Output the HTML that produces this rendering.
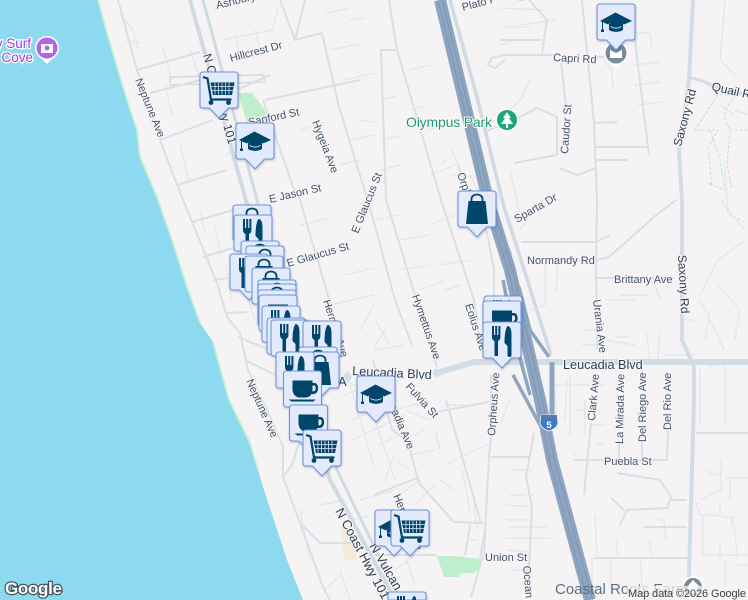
<!DOCTYPE html>
<html><head><meta charset="utf-8"><style>
html,body{margin:0;padding:0;width:748px;height:600px;overflow:hidden;background:#f5f3f4}
svg{display:block;overflow:hidden}
text{font-family:"Liberation Sans",sans-serif}
.l{font-size:11px;fill:#44526a;stroke:#f8f7f8;stroke-width:2.2px;paint-order:stroke;stroke-linejoin:round}
.d{font-size:12px;fill:#2f3d52;stroke:#f8f7f8;stroke-width:2.2px;paint-order:stroke;stroke-linejoin:round}
.b{fill:#e3eafb;stroke:#6d95da;stroke-width:1.1}
.i{fill:#03446a}
</style></head><body>
<svg width="748" height="600" viewBox="0 0 748 600" xmlns="http://www.w3.org/2000/svg">
<defs>
<filter id="s" x="-20%" y="-20%" width="140%" height="140%"><feDropShadow dx="0.5" dy="1" stdDeviation="1" flood-color="#2a3a55" flood-opacity=".3"/></filter>
<path id="bx" class="b" d="M3 0H35Q38 0 38 3V33Q38 36 35 36H28.500L19 46 9.500 36H3Q0 36 0 33V3Q0 0 3 0Z"/>
<g id="cart"><use href="#bx"/><path class="i" d="M10.500 10.500H34.500L32 23H13Z"/><path d="M15 11V22.500M18.500 11V22.500M22 11V22.500M25.500 11V22.500M29 11V22.500M11.500 14.500H34M12 18.500H33" stroke="#e3eafb" stroke-width=".8" fill="none"/><path d="M3 5L7.500 6.500 11 27.500H31.500" fill="none" stroke="#03446a" stroke-width="2.200"/><circle class="i" cx="11" cy="30.500" r="2.400"/><circle class="i" cx="28.500" cy="30.500" r="2.400"/></g>
<g id="fork"><use href="#bx"/><path class="i" d="M9 4H11V13H12.200V4H14.200V13H15.400V4H17.400V15Q17.400 18 15 19V34H11.500V19Q9 18 9 15Z"/><path class="i" d="M24.500 4C27 4 28.500 7 28.500 12V33Q28.500 35 26.500 35T24.500 33V24L21.500 21Q21.500 8 24.500 4Z"/></g>
<g id="bag"><use href="#bx"/><path d="M13.500 11V8C13.500 2 24.500 2 24.500 8V11" fill="none" stroke="#03446a" stroke-width="1.800"/><path class="i" d="M10.500 10H27.500L30 33H8Z"/></g>
<g id="coffee"><use href="#bx"/><path class="i" d="M9 9.500H29V12H31C36 12 36 23 30 23H28C27 25 25 26 23 26.500H15C11 25.500 9 22 9 18Z"/><path d="M29 14.500H30.500C33 14.500 33 20.500 29 20.500" fill="#e3eafb"/><path class="i" d="M5 28.500H32L30 30.500H8Z"/></g>
<g id="grad"><use href="#bx"/><path class="i" d="M3 17L18.500 8.500 35 17 27 20.500C23 17 14 17 11 20.500Z"/><path class="i" d="M12 20C15 16.500 23 16.500 26 20V26C22 28.500 16 28.500 12 26Z"/><path d="M13.500 22.500C17 24.500 21 24.500 24.500 22.500" stroke="#e3eafb" fill="none" stroke-width="1"/><path class="i" d="M5 18H6V25.500H7V28H4V25.500H5Z"/></g>
</defs>

<rect width="748" height="600" fill="#f5f3f4"/>
<!-- parks -->
<path d="M238 93H252L265 110 267 123H247Z" fill="#bfeecd"/>
<path d="M437 556L454 556 481 559 481 567 474 573 461 573 459 577 444 577Z" fill="#bfeecd"/>
<path d="M340 525L353 527 357 560 345 560Z" fill="#f5ebd8"/>
<!-- water -->
<path d="M0 0H98L107 33 117 67 128 103 137 130 140 157 157 197 173 243 187 287 200 323 213 342 217 357 229 400 250 443 263 487 287 560 303 600H0Z" fill="#8dd9ef"/>
<path d="M98 0L107 33 117 67 128 103 137 130 140 157 157 197 173 243 187 287 200 323" fill="none" stroke="#c4f0d4" stroke-width="1.800"/>
<path d="M213 342L217 357 229 400 250 443 258 470" fill="none" stroke="#c4f0d4" stroke-width="1.800"/>

<!-- minor streets -->
<g fill="none" stroke="#e0e6eb" stroke-width="1.200" stroke-linejoin="round">
<path d="M120 14L133 30 138 50M125 40L140 43M165 85L172 115M163 48L172 80M190 50L200 78"/>
<path d="M222 40L272 30 278 10M235 33L240 58M255 30L262 55"/>
<path d="M330 50L360 44M325 14L350 8M344 80L374 73M350 140L374 135M358 120L374 122M340 165L360 160M350 20L365 18"/>
<path d="M180 145L190 185M225 155L235 150M265 100L280 97M300 130L325 122"/>
<path d="M200 210L205 232M214 225L222 255M225 265L232 300M245 290L255 320M300 225L330 218M315 255L345 248M330 305L374 295M345 275L374 268M358 205L374 200"/>
<path d="M375 320L390 345M385 330L375 345M360 330L374 305M374 350L405 345M400 270L430 265M420 290L445 280M400 240L430 235"/>
<path d="M376 220L398 215M381 100L397 96M381 140L400 136M381 170L400 165M410 70L430 65M410 110L425 106M426 130L450 125M430 175L455 165M430 225L455 215M440 265L470 260M445 290L460 285"/>
<path d="M500 8L545 10M520 25L556 20M502 27L530 27M514 40L500 45M530 80L520 100 M510 110L525 95"/>
<path d="M441 165L445 160M470 195L450 145 M450 175H465M470 175L480 195M510 170L520 215M520 230L530 215"/>
<path d="M634 33L650 33 652 48M634 65L660 62M635 85L660 82M638 105L662 102M603 60L612 70 613 90"/>
<path d="M725 0L720 60 735 75M724 160L728 210 745 230M735 115L720 105M700 295L718 260 745 240M718 285L740 310 735 340M705 340L710 310M700 300L724 350"/>
<path d="M545 265L545 305 530 310M558 260L556 293M606 300L636 300M582 345H600M605 340L635 345M615 337L630 337M583 330H600M642 275L655 285 660 300M620 295H648M664 355H694M646 330L650 360M660 330L658 360M680 320H694"/>
<path d="M555 390L557 430M567 380L565 420M585 400V435M555 385H605M570 375V435M576 410H600"/>
<path d="M700 370V425M725 365V425M708 367L720 363"/>
<path d="M573 450L577 460M590 425H606M595 445L605 443M721 458V480"/>
<path d="M705 470L715 475 721 472V490L700 500M725 478H748M730 480V500M733 515L730 530M695 500L700 515H712L733 518 738 560M720 515V505M730 555H748M720 545V560"/>
<path d="M595 515L597 558M616 540L618 558M649 540L652 558M658 520H664L666 540M703 515V555H735M725 560V595M738 565H748"/>
<path d="M592 558V585M611 558V585M640 558L642 585"/>
<path d="M374 430L385 425M378 445L400 435M385 480L394 455M395 460L410 470M400 495L420 480M410 455L435 450M405 440L425 430M430 420L405 410M395 410L430 400M380 380L390 372M345 380L395 410M345 395L390 375M352 420L385 405M352 440L405 415M350 385L375 470M365 390L395 480"/>
<path d="M414 505L435 485M440 480L455 490M445 465L475 450M462 470L470 510M412 530L420 538M474 500L477 530M470 540H478M510 400L500 425M475 450L488 445M445 405H470M435 430L440 450"/>
<path d="M510 470H532M510 495H534M510 527H547M505 538H550M510 570H530M505 520H534M505 505L533 507M507 550L530 552"/>
<path d="M360 500L395 490M320 505L345 500M340 495L355 520 370 515M300 510L310 560M340 570L350 600M325 590L340 575M395 570L415 555M405 555L415 585"/>
</g>
<!-- medium streets -->
<g fill="none" stroke="#d7e0e7" stroke-width="2" stroke-linejoin="round">
<path d="M118 0L137 70 160 140 183 200 217 283 227 317 240 333 248 370 267 410 283 447 283 477 300 523 323 587 330 600"/>
<path d="M300 523L320 543 353 543M283 477L292 465 300 440"/>
<path d="M137 70L200 52M150 93L200 80M170 77L263 75 265 82 170 85ZM160 140L213 120M177 185L227 170M192 222L233 210M203 257L233 248M213 280L228 278M227 313L247 312M238 337L270 350M245 360L275 375"/>
<path d="M270 75L225 95M265 100L360 80M305 0L295 40 322 33M295 40L280 0"/>
<path d="M263 100L293 187 300 200 333 313 345 350M322 33L338 103 372 215 395 300 412 345M373 360L392 430 407 440 419 483 454 522 484 523"/>
<path d="M389 0L397 50H381L386 200 437 367M397 50L441 200 474 300 481 350 M446 400L481 523"/>
<path d="M458 165L487 233 494 270 494 300M491 375V437L489 457 484 553 471 597M491 457H529M534 433L526 477 532 507 529 567"/>
<path d="M437 412L489 402M374 495L417 478M374 555H437M485 530L480 558M470 525L465 555"/>
<path d="M500 55H554M596 57H612M561 63L566 107M514 163L557 155M557 155L557 117 537 108 520 117 484 132M559 168L577 175 596 168M529 0L547 20 542 53M500 40L541 40M505 60L495 68 488 65 492 58 505 55"/>
<path d="M582 0L594 123 597 200 596 265 597 350M634 33L649 155M594 147H648M597 160L627 160M594 123L617 122"/>
<path d="M521 242H596L610 235M597 260L609 257 654 217 676 200M597 278H674M514 265L515 305 500 310"/>
<path d="M591 423L584 495M574 460H667L668 430M619 440V460M642 440V460"/>
<path d="M617 473L660 480 671 497 667 508 627 510 620 525M611 498L624 510M671 500H687M644 527H687M594 558H687M696 433H748"/>
<path d="M518 0H525M510 250L512 255"/>
</g>
<!-- major -->
<g fill="none" stroke-linejoin="round">
<path d="M190 0L245 197 330 480 395 600" stroke="#d0dae2" stroke-width="4"/>
<path d="M203 0L257 200 337 470 400 600" stroke="#d0dae2" stroke-width="3"/>
<path d="M450 0L477 97 504 207 521 260 551 355" stroke="#d0dae2" stroke-width="3.500"/>
<path d="M693 0L689 80 679 150 682 200 682 340 694 367 694 400 689 573 687 600" stroke="#d3dde5" stroke-width="4"/>
<path d="M689 78Q700 78 714 87L748 95" stroke="#d3dde5" stroke-width="3"/>
<path d="M437 373L474 362H748" stroke="#d3dde5" stroke-width="6"/>
<circle cx="437" cy="373" r="4" fill="#d3dde5"/>
<path d="M340 378L348 371 352 378 346 384Z" fill="#d3dde5"/>
<!-- I-5 -->
<path d="M519 287L530 330 549 357" stroke="#8da5c1" stroke-width="3.500"/>
<path d="M503 280L515 340 530 395" stroke="#8da5c1" stroke-width="3.500"/>
<path d="M552 362V415" stroke="#8da5c1" stroke-width="5"/>
<path d="M513 375L540 425" stroke="#8da5c1" stroke-width="3.500"/>
<path d="M440 0L488 200 510 270 540 400 552 460 590 600" stroke="#8da5c1" stroke-width="12"/>
<path d="M438 0L486 200 508 270 538 400 549.500 460 587.500 600M442.500 0L490.500 200 512.500 270 542.500 400 554.500 460 592.500 600" stroke="#7c95b5" stroke-width=".9"/>
</g>
<!-- I-5 shield -->
<path d="M541 415H557L558 423C557 428 552 430 549 431 546 430 541 428 540 423Z" fill="#3b7cc9" stroke="#f0f0f0" stroke-width=".8"/>
<rect x="541" y="415" width="16" height="3" fill="#6a7888"/>
<text x="549" y="428" font-size="9.500" font-weight="bold" fill="#fff" text-anchor="middle">5</text>

<!-- trails -->
<g fill="none" stroke="#a8e0c6" stroke-width=".8" stroke-dasharray="3 2">
<path d="M718 94L708 110 695 130 718 130 708 148 712 185 708 183 725 190 720 160 710 130M735 95L725 110 725 120 730 130 727 165 732 190M720 95H748M735 110L748 115M722 200L730 215 744 222M730 130H748"/>
</g>

<!-- POI -->
<path d="M47 64L38 55H56Z" fill="#fff"/><circle cx="47" cy="48" r="12" fill="#fff"/><circle cx="47" cy="48" r="10.500" fill="#b264ec"/>
<path d="M41 44H53V53H41Z" fill="#fff"/><circle cx="47" cy="48" r="2.500" fill="#b264ec"/>
<text x="31" y="48" font-size="13.500" fill="#a13ae0" text-anchor="end" stroke="#fff" stroke-width="2.500" paint-order="stroke">vy Surf</text>
<text x="33" y="62" font-size="13.500" fill="#a13ae0" text-anchor="end" stroke="#fff" stroke-width="2.500" paint-order="stroke">Cove</text>

<path d="M507 136L498 127H516Z" fill="#fff"/><circle cx="507" cy="120" r="11.500" fill="#fff"/><circle cx="507" cy="120" r="10" fill="#1ca774"/>
<path d="M507 112L511 118H509L513 124H508V128H506V124H501L505 118H503Z" fill="#fff"/>
<text x="406" y="127" font-size="14" fill="#1c9a6c" stroke="#fff" stroke-width="2" paint-order="stroke" textLength="86">Olympus Park</text>

<path d="M616 68L607 59H625Z" fill="#fff"/><circle cx="616" cy="53" r="12" fill="#fff"/><circle cx="616" cy="53" r="10.500" fill="#7a8c98"/>
<path d="M610 50L616 53 622 50V58H610Z" fill="#fff"/>

<circle cx="693" cy="587" r="11" fill="#fff"/><circle cx="693" cy="587" r="9" fill="#7a8c98"/><path d="M693 580L700 587H687Z M688 586H698V593H688Z" fill="#fff"/>

<!-- labels -->
<text class="l" transform="translate(217 9) rotate(-14)">Ashbury</text>
<text class="l" transform="translate(463 11) rotate(-15)">Plato P</text>
<text class="l" transform="translate(231 62) rotate(-15)">Hillcrest Dr</text>
<text class="d" transform="translate(203 55) rotate(74)">N Coast Hwy 101</text>
<text class="l" transform="translate(135 80) rotate(68)">Neptune Ave</text>
<text class="l" transform="translate(249 126) rotate(-12)">Sanford St</text>
<text class="l" transform="translate(312 122) rotate(69)">Hygeia Ave</text>
<text class="l" transform="translate(270 203) rotate(-13)">E Jason St</text>
<text class="l" transform="translate(358 234) rotate(-68)">E Glaucus St</text>
<text class="l" transform="translate(288 267) rotate(-16)">E Glaucus St</text>
<text class="l" transform="translate(323 301) rotate(72)">Hermes Ave</text>
<text class="d" transform="translate(352 375) rotate(3)" style="font-size:12.700px">Leucadia Blvd</text>
<text class="d" x="563" y="369" style="font-size:12.700px">Leucadia Blvd</text>
<text class="d" x="338" y="386" style="font-size:13px">A</text>
<text class="l" transform="translate(405 387) rotate(48)">Fulvia St</text>
<text class="l" transform="translate(385 396) rotate(67)">Arcadia Ave</text>
<text class="l" transform="translate(412 296) rotate(71)">Hymettus Ave</text>
<text class="l" transform="translate(465 305) rotate(72)">Eolus Ave</text>
<text class="l" transform="translate(495 436) rotate(-86)">Orpheus Ave</text>
<text class="l" transform="translate(457 174) rotate(70)">Orpheus Ave</text>
<text class="l" transform="translate(517 223) rotate(-30)">Sparta Dr</text>
<text class="l" transform="translate(568 154) rotate(-86)">Caudor St</text>
<text class="l" transform="translate(553 61) rotate(3)">Capri Rd</text>
<text class="d" transform="translate(681 147) rotate(-75)">Saxony Rd</text>
<text class="d" transform="translate(678 255) rotate(87)">Saxony Rd</text>
<text class="d" transform="translate(711 90) rotate(13)">Quail Ri</text>
<text class="l" x="527" y="264">Normandy Rd</text>
<text class="l" x="614" y="283">Brittany Ave</text>
<text class="l" transform="translate(593 300) rotate(83)">Urania Ave</text>
<text class="l" transform="translate(595 421) rotate(-85)">Clark Ave</text>
<text class="l" transform="translate(623 444) rotate(-89)">La Mirada Ave</text>
<text class="l" transform="translate(646 442) rotate(-90)">Del Riego Ave</text>
<text class="l" transform="translate(671 430) rotate(-90)">Del Rio Ave</text>
<text class="l" x="604" y="465">Puebla St</text>
<text class="l" x="485" y="561">Union St</text>
<text class="l" transform="translate(523 566) rotate(85)">Ocean</text>
<text class="l" transform="translate(246 381) rotate(66)">Neptune Ave</text>
<text class="l" transform="translate(393 496) rotate(67)">Hermes Ave</text>
<text class="d" transform="translate(335 511) rotate(62)" style="font-size:13px">N Coast Hwy 101</text>
<text class="d" transform="translate(369 546) rotate(60)" style="font-size:13px">N Vulcan</text>
<text x="555" y="594" font-size="15" fill="#5d6f84">Coastal Roots Farm</text>

<!-- markers -->
<g filter="url(#s)">
<use href="#cart" x="200" y="72"/>
<use href="#grad" x="236" y="123"/>
<use href="#grad" x="597" y="4"/>
<use href="#bag" x="458" y="191"/>
<use href="#fork" x="484" y="296"/>
<use href="#coffee" x="483" y="301"/>
<use href="#fork" x="483" y="322"/>
<use href="#bag" x="233" y="205"/>
<use href="#fork" x="234" y="215"/>
<use href="#bag" x="241" y="241"/>
<use href="#bag" x="246" y="246"/>
<use href="#fork" x="230" y="254"/>
<use href="#bag" x="245" y="256"/>
<use href="#bag" x="252" y="268"/>
<use href="#bag" x="258" y="280"/>
<use href="#bag" x="258" y="284"/>
<use href="#coffee" x="258" y="290"/>
<use href="#coffee" x="259" y="295"/>
<use href="#fork" x="262" y="306"/>
<use href="#fork" x="267" y="318"/>
<use href="#fork" x="271" y="320"/>
<use href="#fork" x="303" y="321"/>
<use href="#bag" x="299" y="347"/>
<use href="#bag" x="301" y="352"/>
<use href="#fork" x="276" y="352"/>
<use href="#coffee" x="283.500" y="371"/>
<use href="#grad" x="357" y="376"/>
<use href="#coffee" x="289.500" y="405"/>
<use href="#cart" x="303" y="430"/>
<use href="#grad" x="375" y="510"/>
<use href="#cart" x="391" y="510"/>
<path class="b" d="M388 600V595Q388 592 391 592H423Q426 592 426 595V600Z"/>
<path class="i" d="M397 600V596H399V600ZM400 600V596H402V600ZM403 600V596H405V600ZM412 600Q413 596 414 596 416 596 416 600Z"/>
</g>

<!-- attribution -->
<text x="5" y="594" font-size="17" font-weight="bold" fill="#fff" stroke="#44565f" stroke-width="2.500" paint-order="stroke" textLength="57">Google</text>
<rect x="627" y="586" width="121" height="14" fill="#f5f5f5" fill-opacity=".75"/>
<text x="628" y="597" font-size="11" fill="#3c4043" textLength="118">Map data ©2026 Google</text>
</svg>
</body></html>
